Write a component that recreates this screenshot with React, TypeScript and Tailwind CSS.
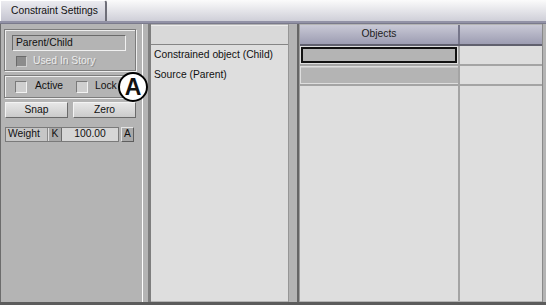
export default function App() {
  return (
    <div className="relative w-[546px] h-[305px] flex flex-col overflow-hidden bg-white font-['Liberation_Sans',Arial,sans-serif] text-[10.3px] leading-none text-[#111]">
      {/* tab strip */}
      <div className="h-[21px] flex bg-gradient-to-b from-[#fbfbfb] to-[#cfcfd8]">
        <div className="w-[107px] h-[21px] flex items-center pl-[10px] bg-gradient-to-b from-[#ececf0] to-[#c4c4d0] border-l border-t border-white border-r-2 border-r-[#6e6e78] rounded-tr-[3px]">
          Constraint Settings
        </div>
      </div>
      <div className="h-[3px] bg-[#9292a6] border-b border-[#7a7a8c]" />

      {/* main */}
      <div className="flex flex-1 min-h-0 bg-[#b4b4b4] border-b-[3px] border-[#5c5c5c]">
        {/* left settings panel */}
        <div className="w-[142px] border-l border-[#6c6c6c] pl-[3px] pt-[5px] flex flex-col">
          <div className="w-[132px] h-[42px] border border-[#7c7c7c] shadow-[1px_1px_0_#eeeeee,inset_1px_1px_0_#eeeeee] pl-[7px] pt-[5px] flex flex-col">
            <div className="w-[114px] h-[16px] flex items-center pl-[3px] border border-t-[#6a6a6a] border-l-[#6a6a6a] border-b-[#f0f0f0] border-r-[#f0f0f0]">
              Parent/Child
            </div>
            <div className="flex items-center mt-[5px] ml-[4px]">
              <div className="w-[11px] h-[11px] bg-[#8c8c8c] border border-t-[#6a6a6a] border-l-[#6a6a6a] border-b-[#d0d0d0] border-r-[#d0d0d0]" />
              <span className="ml-[6px] text-[#ececec] [text-shadow:1px_1px_0_#8e8e8e]">Used In Story</span>
            </div>
          </div>

          <div className="w-[132px] h-[23px] mt-[4px] border border-[#7c7c7c] shadow-[1px_1px_0_#eeeeee,inset_1px_1px_0_#eeeeee] pl-[10px] flex items-center">
            <div className="w-[61px] flex items-center">
              <div className="w-[12px] h-[12px] bg-[#cfcfcf] border border-t-[#7a7a7a] border-l-[#7a7a7a] border-b-[#f2f2f2] border-r-[#f2f2f2]" />
              <span className="ml-[8px]">Active</span>
            </div>
            <div className="flex items-center">
              <div className="w-[12px] h-[12px] bg-[#cfcfcf] border border-t-[#7a7a7a] border-l-[#7a7a7a] border-b-[#f2f2f2] border-r-[#f2f2f2]" />
              <span className="ml-[7px]">Lock</span>
            </div>
          </div>

          <div className="flex gap-[5px] mt-[4px] pl-[1px]">
            <button className="w-[63px] h-[16px] flex items-center justify-center bg-gradient-to-b from-[#e6e6e6] to-[#cbcbcb] border border-t-[#f4f4f4] border-l-[#f4f4f4] border-b-[#6a6a6a] border-r-[#6a6a6a]">
              Snap
            </button>
            <button className="w-[63px] h-[16px] flex items-center justify-center bg-gradient-to-b from-[#e6e6e6] to-[#cbcbcb] border border-t-[#f4f4f4] border-l-[#f4f4f4] border-b-[#6a6a6a] border-r-[#6a6a6a]">
              Zero
            </button>
          </div>

          <div className="flex items-center mt-[9px] pl-[1px] h-[15px]">
            <div className="w-[114px] h-[15px] flex border border-[#7a7a7a]">
              <div className="w-[42px] flex items-center pl-[2px] bg-[#c6c6c6] border-r border-[#8a8a8a]">Weight</div>
              <div className="w-[14px] flex items-center justify-center bg-[#a9a9a9] border-l border-l-[#e0e0e0] border-r border-r-[#6a6a6a]">K</div>
              <div className="flex-1 flex items-center justify-center bg-[#d6d6d6]">100.00</div>
            </div>
            <div className="ml-[2px] w-[13px] h-[15px] flex items-center justify-center bg-[#a9a9a9] border border-t-[#e4e4e4] border-l-[#e4e4e4] border-b-[#5e5e5e] border-r-[#5e5e5e]">A</div>
          </div>
        </div>

        {/* splitter */}
        <div className="w-[9px] flex">
          <div className="w-[1px] bg-white" />
          <div className="w-[5px]" />
          <div className="w-[3px] bg-[#7e7e7e]" />
        </div>

        {/* middle names panel */}
        <div className="w-[138px] pt-[1px] pb-[1px] flex flex-col border-r border-[#969696]">
          <div className="h-[20px] bg-[#d9d9d9] border-t border-[#ececec] border-b border-b-[#858585]" />
          <div className="flex-1 bg-[#dedede] pl-[3px]">
            <div className="h-[20px] flex items-center">Constrained object (Child)</div>
            <div className="h-[20px] flex items-center">Source (Parent)</div>
          </div>
        </div>

        {/* splitter */}
        <div className="w-[11px] flex">
          <div className="w-[8px]" />
          <div className="w-[2px] bg-[#666666]" />
          <div className="w-[1px] bg-[#9c9c9c]" />
        </div>

        {/* objects grid */}
        <div className="w-[242px] pt-[1px] pb-[1px] flex flex-col">
          <div className="h-[21px] flex bg-gradient-to-b from-[#c9c9d6] to-[#9d9db2] border-b-2 border-[#60606e]">
            <div className="w-[160px] flex items-center justify-center border-r-2 border-[#76768a] text-[#222]">Objects</div>
            <div className="flex-1" />
          </div>
          <div className="flex-1 bg-[#dedede] flex flex-col">
            <div className="h-[20px] flex border-b-2 border-[#a4a4a4]">
              <div className="w-[160px] p-[1px] border-r-2 border-[#a4a4a4]">
                <div className="w-full h-full bg-[#b4b4b4] border-2 border-[#111]" />
              </div>
              <div className="flex-1" />
            </div>
            <div className="h-[20px] flex border-b-2 border-[#a4a4a4]">
              <div className="w-[160px] p-[1px] pr-0 border-r-2 border-[#a4a4a4]">
                <div className="w-full h-full bg-[#b4b4b4] border-t border-[#c8c8c8]" />
              </div>
              <div className="flex-1" />
            </div>
            <div className="flex-1 flex">
              <div className="w-[160px] border-r-2 border-[#a4a4a4]" />
            </div>
          </div>
        </div>
        <div className="w-[1px] bg-[#8a8a8a]" />
        <div className="w-[3px]" />
      </div>

      {/* callout */}
      <div className="absolute left-[118px] top-[72px] w-[30px] h-[30px] rounded-full bg-white border-[2.5px] border-black flex items-center justify-center text-[23px] font-semibold leading-none">
        A
      </div>
    </div>
  );
}
